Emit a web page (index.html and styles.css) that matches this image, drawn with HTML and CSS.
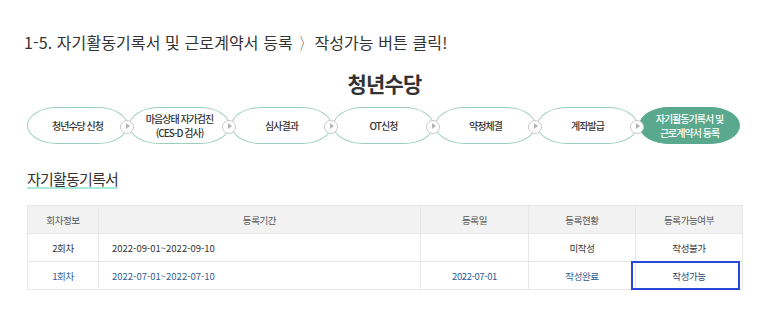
FILE: index.html
```html
<!DOCTYPE html>
<html lang="ko">
<head>
<meta charset="utf-8">
<link rel="stylesheet" href="styles.css">
</head>
<body>
<div class="page">
  <p class="guide">1-5. 자기활동기록서 및 근로계약서 등록 <span class="gt">〉</span>작성가능 버튼 클릭!</p>
  <h1 class="brand">청년수당</h1>
  <ol class="steps">
    <li class="step">청년수당 신청</li>
    <li class="step">마음상태 자가검진<br>(CES-D 검사)</li>
    <li class="step">심사결과</li>
    <li class="step">OT신청</li>
    <li class="step">약정체결</li>
    <li class="step">계좌발급</li>
    <li class="step step-on">자기활동기록서 및<br>근로계약서 등록</li>
  </ol>
  <h2 class="sec"><span class="sec-text">자기활동기록서</span></h2>
  <table class="tbl">
    <colgroup>
      <col class="c1"><col class="c2"><col class="c3"><col class="c4"><col class="c5">
    </colgroup>
    <thead>
      <tr><th>회차정보</th><th>등록기간</th><th>등록일</th><th>등록현황</th><th>등록가능여부</th></tr>
    </thead>
    <tbody>
      <tr><td>2회차</td><td class="left">2022-09-01~2022-09-10</td><td></td><td>미작성</td><td>작성불가</td></tr>
      <tr class="done"><td>1회차</td><td class="left">2022-07-01~2022-07-10</td><td>2022-07-01</td><td>작성완료</td><td class="can"><span class="mark"></span>작성가능</td></tr>
    </tbody>
  </table>
</div>
</body>
</html>
```
FILE: styles.css
```css
* { box-sizing: border-box; }
html, body { margin: 0; padding: 0; background: #fff; }
body {
  font-family: "Noto Sans CJK KR", "Noto Sans", sans-serif;
  color: #333;
}
.page {
  width: 780px;
  padding: 0 38px 0 27px;
}
.guide {
  margin: 30px 0 0 -3px;
  font-size: 16px;
  line-height: 24px;
  letter-spacing: 0.1px;
  color: #333;
}
.gt {
  display: inline-block;
  width: 12px;
  margin: 0 2px 0 3px;
  font-weight: 300;
  transform: scaleX(0.6);
  transform-origin: left center;
}
.brand {
  margin: 16px 0 0;
  text-align: center;
  font-size: 21px;
  line-height: 26px;
  font-weight: 700;
  letter-spacing: -0.8px;
  color: #333;
}
.steps {
  list-style: none;
  margin: 11px 0 0;
  padding: 0;
  display: flex;
  gap: 1px;
  width: 713px;
}
.step {
  position: relative;
  flex: 1;
  height: 37px;
  border: 1px solid #9ccfba;
  border-radius: 30px / 50%;
  background: #fff;
  display: flex;
  align-items: center;
  justify-content: center;
  text-align: center;
  font-size: 10px;
  line-height: 14px;
  font-weight: 500;
  letter-spacing: -1px;
  color: #333;
}
.step::after {
  content: "";
  position: absolute;
  right: -7px;
  top: 50%;
  width: 12px;
  height: 12px;
  margin-top: -6px;
  border: 1px solid #c9c9c9;
  border-radius: 50%;
  background: #fff;
  z-index: 2;
}
.step::before {
  content: "";
  position: absolute;
  right: -3px;
  top: 50%;
  margin-top: -3px;
  border-left: 4px solid #b4b4b4;
  border-top: 3px solid transparent;
  border-bottom: 3px solid transparent;
  z-index: 3;
}
.step-on {
  background: #5aa98e;
  border-color: #5aa98e;
  color: #fff;
}
.step-on::after, .step-on::before { display: none; }
.sec {
  margin: 25px 0 0;
  font-size: 15px;
  line-height: 20px;
  font-weight: 400;
  letter-spacing: -0.8px;
  color: #333;
}
.sec-text {
  display: inline-block;
  border-bottom: 2px solid #a8ead8;
  line-height: 17px;
}
.tbl {
  margin-top: 16px;
  width: 715px;
  border-collapse: collapse;
  table-layout: fixed;
  font-size: 9.5px;
  letter-spacing: -0.4px;
}
.c1 { width: 71px; }
.c2 { width: 322px; }
.c3 { width: 108px; }
.c4 { width: 107px; }
.c5 { width: 107px; }
.tbl th, .tbl td {
  height: 28px;
  padding: 0;
  border: 1px solid #e7e7e7;
  text-align: center;
  vertical-align: middle;
}
.tbl th {
  background: #f2f2f2;
  font-weight: 400;
  color: #555;
}
.tbl td { color: #333; }
.tbl td.left { text-align: left; padding-left: 13px; letter-spacing: 0; }
.tbl tr.done td { color: #2f5d95; }
.tbl tr.done td.can { color: #2b3f6e; position: relative; }
.mark {
  position: absolute;
  left: -5px;
  top: -1px;
  right: 2px;
  bottom: -1px;
  border: 2px solid #2747d8;
}
```
